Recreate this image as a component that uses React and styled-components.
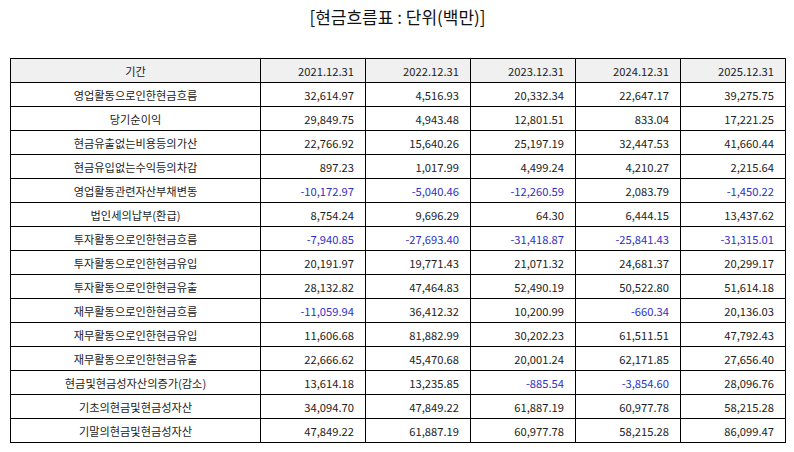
import React from 'react';
import styled, { createGlobalStyle } from 'styled-components';

const GlobalStyle = createGlobalStyle`
  html, body {
    margin: 0;
    padding: 0;
    background: #ffffff;
    font-family: "Noto Sans CJK KR", "Noto Sans", sans-serif;
    color: #222;
  }
`;

const Page = styled.div`
  width: 794px;
  height: 452px;
  padding: 0 9px 0 10px;
  box-sizing: border-box;
`;

const Title = styled.h2`
  margin: 0;
  height: 58px;
  padding-top: 5px;
  box-sizing: border-box;
  text-align: center;
  font-size: 17px;
  font-weight: 400;
  line-height: 24px;
  color: #111;
`;

const Table = styled.table`
  width: 775px;
  border-collapse: collapse;
  table-layout: fixed;
  font-size: 11.2px;
`;

const Th = styled.th`
  height: 23px;
  padding: 0 11px;
  border: 1px solid #000;
  background: #f0f0f0;
  font-weight: 400;
  text-align: ${(p) => (p.$label ? 'center' : 'right')};
  color: #222;
`;

const Td = styled.td`
  height: 23px;
  padding: 0 11px;
  border: 1px solid #000;
  text-align: ${(p) => (p.$label ? 'center' : 'right')};
  color: ${(p) => (p.$neg ? '#2f2fc8' : '#222')};
  white-space: nowrap;
`;

const years = ['2021.12.31', '2022.12.31', '2023.12.31', '2024.12.31', '2025.12.31'];

const rows = [
  ['영업활동으로인한현금흐름', '32,614.97', '4,516.93', '20,332.34', '22,647.17', '39,275.75'],
  ['당기순이익', '29,849.75', '4,943.48', '12,801.51', '833.04', '17,221.25'],
  ['현금유출없는비용등의가산', '22,766.92', '15,640.26', '25,197.19', '32,447.53', '41,660.44'],
  ['현금유입없는수익등의차감', '897.23', '1,017.99', '4,499.24', '4,210.27', '2,215.64'],
  ['영업활동관련자산부채변동', '-10,172.97', '-5,040.46', '-12,260.59', '2,083.79', '-1,450.22'],
  ['법인세의납부(환급)', '8,754.24', '9,696.29', '64.30', '6,444.15', '13,437.62'],
  ['투자활동으로인한현금흐름', '-7,940.85', '-27,693.40', '-31,418.87', '-25,841.43', '-31,315.01'],
  ['투자활동으로인한현금유입', '20,191.97', '19,771.43', '21,071.32', '24,681.37', '20,299.17'],
  ['투자활동으로인한현금유출', '28,132.82', '47,464.83', '52,490.19', '50,522.80', '51,614.18'],
  ['재무활동으로인한현금흐름', '-11,059.94', '36,412.32', '10,200.99', '-660.34', '20,136.03'],
  ['재무활동으로인한현금유입', '11,606.68', '81,882.99', '30,202.23', '61,511.51', '47,792.43'],
  ['재무활동으로인한현금유출', '22,666.62', '45,470.68', '20,001.24', '62,171.85', '27,656.40'],
  ['현금및현금성자산의증가(감소)', '13,614.18', '13,235.85', '-885.54', '-3,854.60', '28,096.76'],
  ['기초의현금및현금성자산', '34,094.70', '47,849.22', '61,887.19', '60,977.78', '58,215.28'],
  ['기말의현금및현금성자산', '47,849.22', '61,887.19', '60,977.78', '58,215.28', '86,099.47'],
];

export default function App() {
  return (
    <>
      <GlobalStyle />
      <Page>
        <Title>[현금흐름표 : 단위(백만)]</Title>
        <Table>
          <colgroup>
            <col style={{ width: 250 }} />
            {years.map((y) => (
              <col key={y} style={{ width: 105 }} />
            ))}
          </colgroup>
          <thead>
            <tr>
              <Th $label>기간</Th>
              {years.map((y) => (
                <Th key={y}>{y}</Th>
              ))}
            </tr>
          </thead>
          <tbody>
            {rows.map(([label, ...vals]) => (
              <tr key={label}>
                <Td $label>{label}</Td>
                {vals.map((v, i) => (
                  <Td key={i} $neg={v.startsWith('-')}>
                    {v}
                  </Td>
                ))}
              </tr>
            ))}
          </tbody>
        </Table>
      </Page>
    </>
  );
}
